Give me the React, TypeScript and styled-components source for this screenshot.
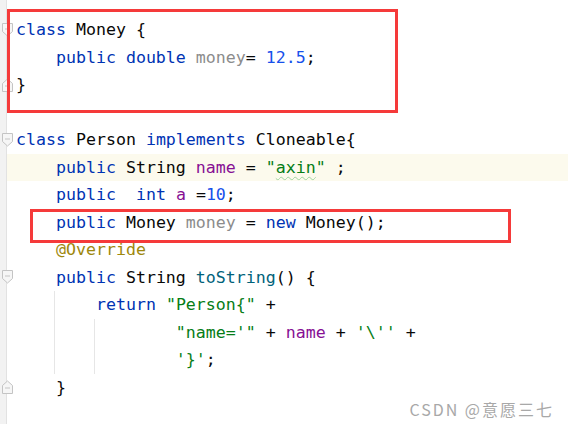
import React from "react";
import styled, { createGlobalStyle } from "styled-components";

const Global = createGlobalStyle`
  html, body { margin: 0; padding: 0; background: #ffffff; }
  #root { width: 568px; height: 424px; }
`;

const LINE = 27.5;
const TOP = 16;
const CH = 10;
const TEXT_LEFT = 9;

const Editor = styled.div`
  position: relative;
  width: 568px;
  height: 424px;
  overflow: hidden;
  display: flex;
  background: #ffffff;
  font-family: "DejaVu Sans Mono", "Liberation Mono", monospace;
  font-size: 16.6px;
  color: #080808;
`;

const Gutter = styled.div`
  position: relative;
  z-index: 2;
  width: 6px;
  flex: 0 0 6px;
  background: #f2f2f2;
  border-right: 1px solid #e2e2e2;
  padding-top: ${TOP}px;
  display: flex;
  flex-direction: column;
  overflow: visible;
`;

const GutterRow = styled.div`
  height: ${LINE}px;
  display: flex;
  align-items: center;
  overflow: visible;
  padding-left: 2px;

  svg {
    flex: 0 0 12px;
    display: block;
  }
`;

const Code = styled.div`
  flex: 1;
  padding-top: ${TOP}px;
  display: flex;
  flex-direction: column;
`;

const Row = styled.div<{ $current?: boolean }>`
  position: relative;
  height: ${LINE}px;
  line-height: ${LINE}px;
  white-space: pre;
  padding-left: ${TEXT_LEFT}px;
  background: ${(p) => (p.$current ? "#fcfaed" : "transparent")};
`;

const Guide = styled.span<{ $col: number }>`
  position: absolute;
  top: 0;
  bottom: 0;
  left: ${(p) => TEXT_LEFT + p.$col * CH - 2}px;
  width: 1px;
  background: #e6e6e6;
`;

const Kw = styled.span`color: #0033b3;`;
const Str = styled.span`color: #067d17;`;
const Num = styled.span`color: #1750eb;`;
const Field = styled.span`color: #871094;`;
const Unused = styled.span`color: #8c8c8c;`;
const Ann = styled.span`color: #9e880d;`;
const Method = styled.span`color: #00627a;`;
const Typo = styled.span`
  text-decoration: underline wavy #9fd49f;
  text-decoration-thickness: 1px;
  text-underline-offset: 3px;
`;

const Frame = styled.div<{ $x: number; $y: number; $w: number; $h: number }>`
  position: absolute;
  left: ${(p) => p.$x}px;
  top: ${(p) => p.$y}px;
  width: ${(p) => p.$w}px;
  height: ${(p) => p.$h}px;
  box-sizing: border-box;
  border: 3px solid #f53a3a;
  pointer-events: none;
  z-index: 3;
`;

const Watermark = styled.div`
  position: absolute;
  right: 14px;
  bottom: 5px;
  font-family: "Noto Sans CJK SC", "Noto Sans", sans-serif;
  font-size: 16px;
  letter-spacing: 2px;
  line-height: 20px;
  color: #a8a8a8;
  text-shadow: 0 0 1px #ffffff;
  z-index: 4;
`;

const FoldStart = () => (
  <svg width="12" height="14" viewBox="0 0 12 14">
    <path d="M0.5 0.5 H10.5 V8.5 L5.5 13 L0.5 8.5 Z" fill="#f6f6f6" stroke="#c4c4c4" strokeWidth="1" />
    <path d="M3 6 H8" stroke="#c4c4c4" strokeWidth="1" />
  </svg>
);

const FoldEnd = () => (
  <svg width="12" height="14" viewBox="0 0 12 14">
    <path d="M0.5 13.5 H10.5 V5.5 L5.5 1 L0.5 5.5 Z" fill="#f6f6f6" stroke="#c4c4c4" strokeWidth="1" />
    <path d="M3 8 H8" stroke="#c4c4c4" strokeWidth="1" />
  </svg>
);

type Fold = "start" | "end" | undefined;

const folds: Fold[] = [
  "start", undefined, "end", undefined, "start", undefined, undefined,
  undefined, undefined, "start", undefined, undefined, undefined, "end",
];

const lines: { content: React.ReactNode; current?: boolean; guides?: number[] }[] = [
  { content: <><Kw>class</Kw> Money {"{"}</> },
  { content: <>    <Kw>public double</Kw> <Unused>money</Unused>= <Num>12.5</Num>;</> },
  { content: <>{"}"}</> },
  { content: <> </> },
  { content: <><Kw>class</Kw> Person <Kw>implements</Kw> Cloneable{"{"}</> },
  { content: <>    <Kw>public</Kw> String <Field>name</Field> = <Str>"<Typo>axin</Typo>"</Str> ;</>, current: true },
  { content: <>    <Kw>public</Kw>  <Kw>int</Kw> <Field>a</Field> =<Num>10</Num>;</> },
  { content: <>    <Kw>public</Kw> Money <Unused>money</Unused> = <Kw>new</Kw> Money();</> },
  { content: <>    <Ann>@Override</Ann></> },
  { content: <>    <Kw>public</Kw> String <Method>toString</Method>() {"{"}</> },
  { content: <>        <Kw>return</Kw> <Str>"Person{"{"}"</Str> +</>, guides: [4] },
  { content: <>                <Str>"name='"</Str> + <Field>name</Field> + <Str>'\''</Str> +</>, guides: [4, 8] },
  { content: <>                <Str>'{"}"}'</Str>;</>, guides: [4, 8] },
  { content: <>    {"}"}</> },
];

export default function App() {
  return (
    <>
      <Global />
      <Editor>
        <Gutter>
          {folds.map((f, i) => (
            <GutterRow key={i}>
              {f === "start" ? <FoldStart /> : f === "end" ? <FoldEnd /> : null}
            </GutterRow>
          ))}
        </Gutter>
        <Code>
          {lines.map((l, i) => (
            <Row key={i} $current={l.current}>
              {l.guides?.map((g) => <Guide key={g} $col={g} />)}
              {l.content}
            </Row>
          ))}
        </Code>
        <Frame $x={7} $y={9} $w={391} $h={104} />
        <Frame $x={30} $y={209} $w={481} $h={34} />
        <Watermark>CSDN @意愿三七</Watermark>
      </Editor>
    </>
  );
}
